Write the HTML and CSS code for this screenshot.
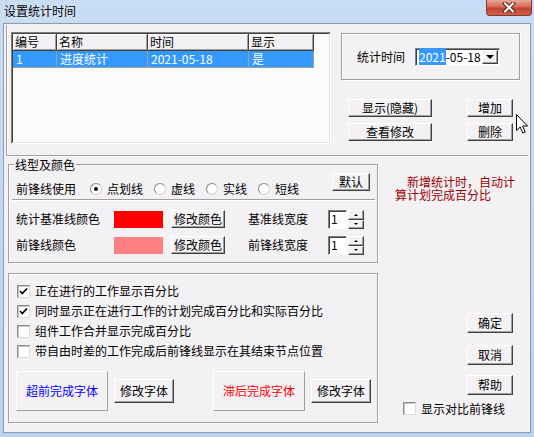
FILE: index.html
```html
<!DOCTYPE html>
<html lang="zh-CN">
<head>
<meta charset="utf-8">
<title>设置统计时间</title>
<link rel="stylesheet" href="styles.css">
</head>
<body>
<div class="win">
  <div class="titlebar">
    <span class="title">设置统计时间</span>
    <div class="close">
      <svg width="14" height="11" viewBox="0 0 14 11"><path d="M3 1.5 L11 9.5 M11 1.5 L3 9.5" stroke="#5b2019" stroke-width="4" stroke-linecap="square"/><path d="M3 1.5 L11 9.5 M11 1.5 L3 9.5" stroke="#fff" stroke-width="2" stroke-linecap="square"/></svg>
    </div>
  </div>
  <div class="client">
    <div class="top">
      <div class="listbox">
        <div class="listinner">
          <div class="lrow head">
            <span class="cell c1">编号</span><span class="cell c2">名称</span><span class="cell c3">时间</span><span class="cell c4">显示</span>
          </div>
          <div class="lrow sel">
            <span class="cell c1">1</span><span class="cell c2">进度统计</span><span class="cell c3">2021-05-18</span><span class="cell c4">是</span>
          </div>
        </div>
      </div>
      <div class="topright">
        <div class="datebox">
          <span class="lbl">统计时间</span>
          <div class="combo">
            <span class="val"><span class="hl">2021</span>-05-18</span>
            <span class="drop"><span class="tri"></span></span>
          </div>
        </div>
        <div class="btngrid">
          <button class="btn">显示(隐藏)</button>
          <button class="btn">增加</button>
          <button class="btn">查看修改</button>
          <button class="btn">删除</button>
        </div>
      </div>
    </div>

    <div class="mid">
      <fieldset class="group linegroup">
        <legend>线型及颜色</legend>
        <div class="r1">
          <span class="t">前锋线使用</span>
          <span class="opt first"><span class="radio on"></span><span class="t2">点划线</span></span>
          <span class="opt"><span class="radio"></span><span class="t2">虚线</span></span>
          <span class="opt"><span class="radio"></span><span class="t2">实线</span></span>
          <span class="opt"><span class="radio"></span><span class="t2">短线</span></span>
          <button class="btn dflt">默认</button>
        </div>
        <div class="sep"></div>
        <div class="crow">
          <span>统计基准线颜色</span>
          <span class="swatch red"></span>
          <button class="btn cbtn">修改颜色</button>
          <span>基准线宽度</span>
          <span class="spin"><span class="edit">1</span><span class="sbtns"><span class="sb up"><span class="tup"></span></span><span class="sb dn"><span class="tdn"></span></span></span></span>
        </div>
        <div class="crow r3">
          <span>前锋线颜色</span>
          <span class="swatch pink"></span>
          <button class="btn cbtn">修改颜色</button>
          <span>前锋线宽度</span>
          <span class="spin"><span class="edit">1</span><span class="sbtns"><span class="sb up"><span class="tup"></span></span><span class="sb dn"><span class="tdn"></span></span></span></span>
        </div>
      </fieldset>
      <div class="note"><div class="l1">新增统计时，自动计</div><div class="l2">算计划完成百分比</div></div>
    </div>

    <div class="bottom">
      <fieldset class="group checkgroup">
        <div class="chk"><span class="cb on"><svg width="9" height="9" viewBox="0 0 9 9"><path d="M1 4 L3.3 6.5 L8 1.5" fill="none" stroke="#000" stroke-width="1.7"/></svg></span><span>正在进行的工作显示百分比</span></div>
        <div class="chk"><span class="cb on"><svg width="9" height="9" viewBox="0 0 9 9"><path d="M1 4 L3.3 6.5 L8 1.5" fill="none" stroke="#000" stroke-width="1.7"/></svg></span><span>同时显示正在进行工作的计划完成百分比和实际百分比</span></div>
        <div class="chk"><span class="cb"></span><span>组件工作合并显示完成百分比</span></div>
        <div class="chk"><span class="cb"></span><span>带自由时差的工作完成后前锋线显示在其结束节点位置</span></div>
        <div class="fontrow">
          <span class="fbox blue">超前完成字体</span>
          <button class="btn fbtn">修改字体</button>
          <span class="fbox redt second">滞后完成字体</span>
          <button class="btn fbtn">修改字体</button>
        </div>
      </fieldset>
      <div class="side">
        <button class="btn sbtn ok">确定</button>
        <button class="btn sbtn cancel">取消</button>
        <button class="btn sbtn help">帮助</button>
        <div class="chk2"><span class="cb"></span><span>显示对比前锋线</span></div>
      </div>
    </div>
  </div>
  <svg class="cursor" width="13" height="20" viewBox="0 0 13 20"><path d="M0.5 0.5 L0.5 16.5 L4.2 13 L6.8 19 L9.2 18 L6.6 12 L11.5 12 Z" fill="#fff" stroke="#000" stroke-width="1" stroke-linejoin="miter"/></svg>
</div>
</body>
</html>
```

FILE: styles.css
```css
* { box-sizing: border-box; }
html, body { margin: 0; padding: 0; }
body {
  width: 534px; height: 437px; overflow: hidden;
  font-family: "Noto Sans CJK SC", "Noto Sans", sans-serif;
  font-size: 12px; line-height: 14px; color: #000;
  background: #bcd4ee;
}
.win {
  position: relative; width: 534px; height: 437px;
  background: linear-gradient(#c8ddf3, #b9d2ed);
}
.titlebar { height: 23px; display: flex; justify-content: space-between; align-items: flex-start; }
.title { margin: 3px 0 0 4px; font-size: 12px; line-height: 16px; text-shadow: 0 0 4px #e6f0fb; }
.close {
  width: 46px; height: 16px; margin-right: 2px;
  border: 1px solid #86382e; border-top: none; border-radius: 0 0 4px 4px;
  background: linear-gradient(#eaa899, #d66a58 45%, #c1422f 55%, #d0624c);
  display: flex; align-items: center; justify-content: center;
}
.client {
  margin-left: 3px; width: 528px; height: 410px;
  border: 1px solid #8e9cae; background: #f3f1f4;
  display: flex; flex-direction: column;
}
.btn {
  padding: 0; margin: 0; font: inherit; color: #000; line-height: 14px;
  background: #f3f1f4;
  border: 1px solid; border-color: #fff #404040 #404040 #fff;
  box-shadow: inset -1px -1px 0 #a0a0a0;
  display: flex; align-items: center; justify-content: center;
}

/* top panel */
.top {
  margin: 1px 0 0 2px; width: 522px; height: 131px;
  border-left: 1px solid #a0a0a0; border-bottom: 1px solid #a0a0a0;
  box-shadow: inset 1px 0 0 #fff, 0 1px 0 #fff;
  display: flex; align-items: flex-start;
}
.listbox {
  margin: 7px 0 0 4px; width: 320px; height: 112px;
  border: 1px solid; border-color: #808080 #fff #fff #808080;
}
.listinner {
  width: 100%; height: 100%; background: #fbfcfa;
  border: 1px solid; border-color: #404040 #e3e3e3 #e3e3e3 #404040;
}
.lrow { display: flex; height: 17px; }
.cell { padding-left: 2px; line-height: 16px; white-space: nowrap; overflow: hidden; }
.c1 { width: 44px; }
.c2 { width: 91px; }
.c3 { width: 101px; }
.c4 { width: 65px; }
.head .cell {
  background: #f3f1f4;
  border-right: 1px solid #404040; border-bottom: 1px solid #404040;
  box-shadow: inset 1px 1px 0 #fff, inset -1px -1px 0 #a0a0a0;
}
.sel .cell {
  background: #3399ff; color: #fff;
  border-right: 1px solid #a0a0a0; border-bottom: 1px solid #a0a0a0;
  padding-left: 3px;
}
.topright { margin: 8px 0 0 10px; display: flex; flex-direction: column; }
.datebox {
  width: 179px; height: 47px;
  border: 1px solid #a0a0a0; box-shadow: inset 1px 1px 0 #fff, 1px 1px 0 #fff;
  display: flex; align-items: center; padding-left: 15px;
}
.combo {
  margin-left: 10px; width: 85px; height: 18px; padding: 1px 1px 1px 3px;
  background: #fff; display: flex; align-items: center;
  border: 1px solid; border-color: #808080 #fff #fff #808080;
  box-shadow: inset 1px 1px 0 #404040;
}
.val { line-height: 13px; }
.hl { background: #3399ff; color: #fff; }
.drop {
  margin-left: auto; width: 16px; height: 14px;
  background: #f3f1f4; border: 1px solid; border-color: #fff #404040 #404040 #fff;
  box-shadow: inset -1px -1px 0 #a0a0a0;
  display: flex; align-items: center; justify-content: center;
}
.tri { width: 0; height: 0; border-left: 4px solid transparent; border-right: 4px solid transparent; border-top: 4px solid #000; }
.btngrid {
  margin: 19px 0 0 7px; display: grid;
  grid-template-columns: 84px 46px; grid-auto-rows: 18px;
  column-gap: 35px; row-gap: 6px;
}

/* group boxes */
.group {
  margin: 0; min-width: 0;
  border: 1px solid #a0a0a0;
  box-shadow: inset 1px 1px 0 #fff, 1px 1px 0 #fff;
}
.group legend {
  padding: 0 1px; margin-left: -2px; line-height: 15px; background: #f3f1f4;
}
.mid { display: flex; align-items: flex-start; margin-top: 1px; }
.linegroup { margin-left: 4px; width: 370px; padding: 0 0 7px 7px; }
.r1 { display: flex; align-items: flex-start; height: 27px; }
.r1 .t { margin-top: 10px; }
.opt { display: flex; align-items: flex-start; margin-left: 11px; margin-top: 11px; }
.opt.first { margin-left: 14px; }
.opt .t2 { margin-top: -1px; margin-left: 5px; }
.radio {
  width: 12px; height: 12px; border-radius: 50%;
  border: 1px solid; border-color: #8a8a8a #d6d6d6 #d6d6d6 #8a8a8a;
  background: radial-gradient(circle, #fff 55%, #e4e4e4);
  display: flex; align-items: center; justify-content: center;
}
.radio.on::after { content: ""; width: 4px; height: 4px; border-radius: 50%; background: #000; }
.dflt { margin-left: auto; margin-right: 7px; margin-top: 1px; width: 38px; height: 18px; }
.sep { height: 2px; border-top: 1px solid #a0a0a0; border-bottom: 1px solid #fff; margin: 0 2px 0 -4px; }
.crow {
  display: grid; grid-template-columns: 98px 57px 77px 80px auto;
  align-items: center; height: 20px; margin-top: 8px;
}
.crow.r3 { margin-top: 6px; }
.swatch { width: 49px; height: 17px; }
.swatch.red { background: #ff0000; }
.swatch.pink { background: #ff8080; }
.cbtn { width: 54px; height: 18px; }
.spin { display: flex; align-items: center; }
.edit {
  width: 19px; height: 19px; background: #fff; padding-left: 2px; line-height: 16px;
  border: 1px solid; border-color: #808080 #fff #fff #808080;
  box-shadow: inset 1px 1px 0 #404040;
}
.sbtns { margin-left: 1px; display: flex; flex-direction: column; }
.sb {
  width: 16px; height: 10px; background: #f3f1f4;
  border: 1px solid; border-color: #fff #404040 #404040 #fff;
  box-shadow: inset -1px -1px 0 #a0a0a0;
  display: flex; align-items: center; justify-content: center;
}
.sb.dn { height: 9px; }
.tup { width: 0; height: 0; border-left: 2px solid transparent; border-right: 2px solid transparent; border-bottom: 2px solid #000; }
.tdn { width: 0; height: 0; border-left: 2px solid transparent; border-right: 2px solid transparent; border-top: 2px solid #000; }
.note {
  margin: 19px 0 0 17px; color: #9b0000; white-space: nowrap;
  display: flex; flex-direction: column;
}
.note .l1 { line-height: 12px; padding-left: 12px; }
.note .l2 { line-height: 12px; margin-top: 1px; }

/* bottom */
.bottom { display: flex; align-items: flex-start; margin-top: 10px; }
.checkgroup { margin-left: 4px; width: 370px; height: 150px; padding: 7px 0 0 8px; }
.chk { display: flex; align-items: center; height: 20px; }
.cb {
  width: 13px; height: 13px; margin-right: 5px; background: #fff;
  border: 1px solid; border-color: #8a8a8a #dcdcdc #dcdcdc #8a8a8a;
  box-shadow: inset 1px 1px 0 #c8c8c8;
  display: flex; align-items: center; justify-content: center;
}
.fontrow { display: flex; align-items: center; margin: 10px 0 0 -1px; }
.fbox {
  width: 92px; height: 40px;
  border: 1px solid; border-color: #fff #a0a0a0 #a0a0a0 #fff;
  display: flex; align-items: center; justify-content: center;
}
.fbox.blue { color: #0000ff; }
.fbox.redt { color: #ff0000; }
.fbox.second { margin-left: 39px; }
.fbtn { width: 60px; height: 24px; margin-left: 6px; }
.side { margin-left: 25px; display: flex; flex-direction: column; }
.sbtn { width: 46px; height: 20px; margin-left: 64px; }
.sbtn.ok { margin-top: 40px; }
.sbtn.cancel { margin-top: 12px; }
.sbtn.help { margin-top: 10px; }
.chk2 { display: flex; align-items: center; height: 13px; margin-top: 7px; white-space: nowrap; }
.cursor { position: absolute; left: 516px; top: 114px; }
```
